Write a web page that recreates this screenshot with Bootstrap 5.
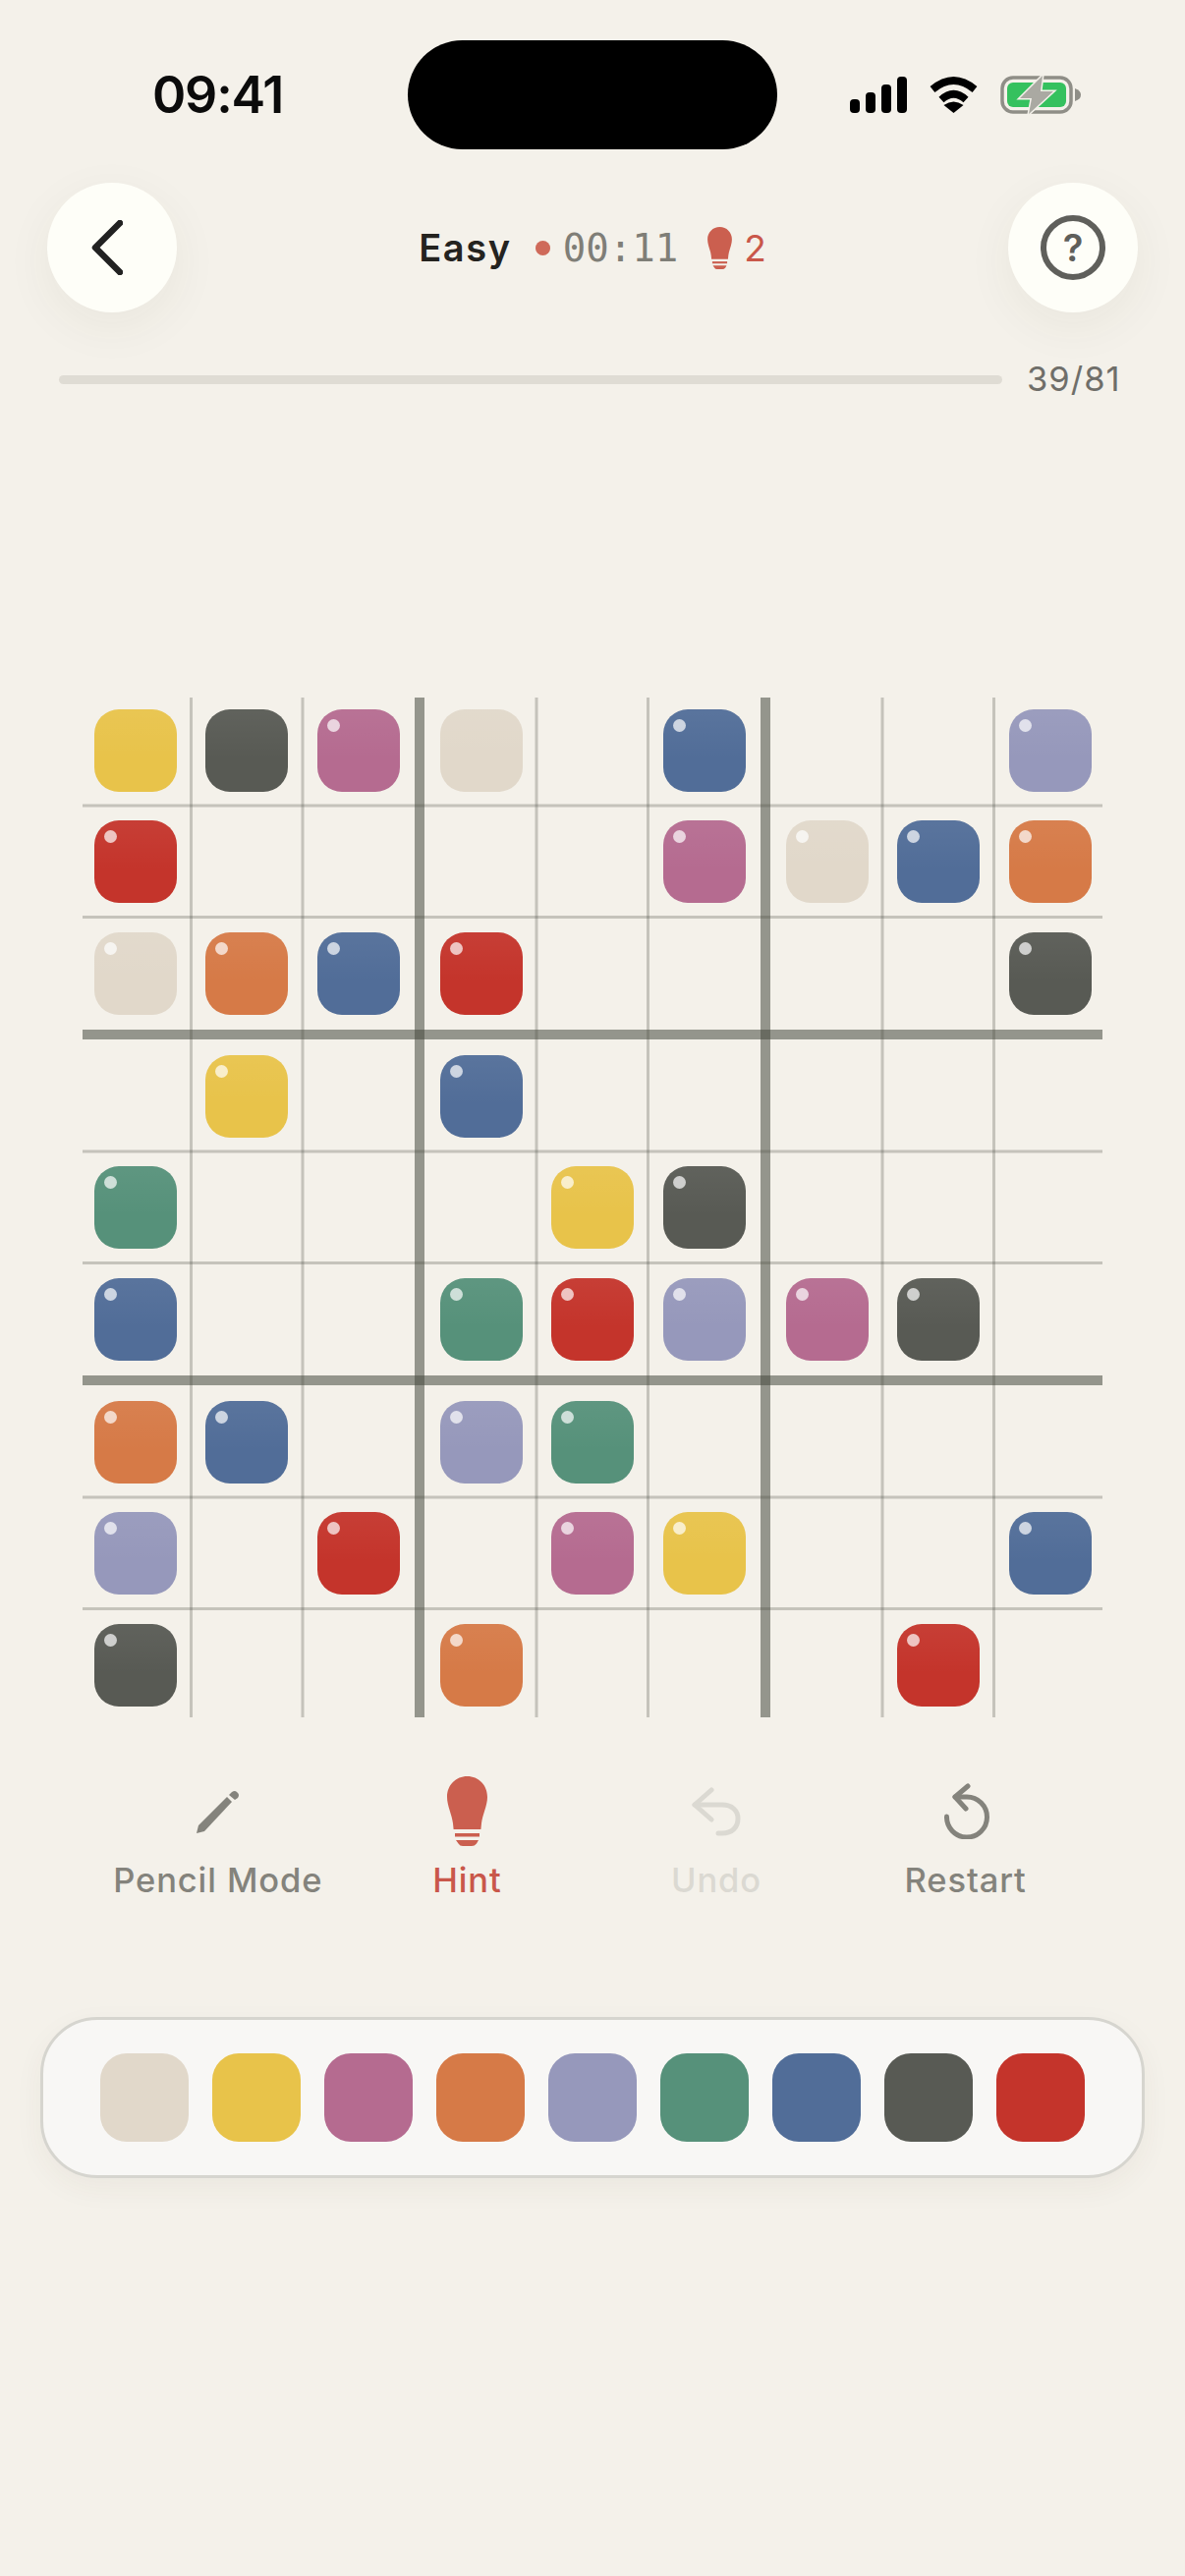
<!DOCTYPE html>
<html lang="en">
<head>
  <meta charset="UTF-8" />
  <meta name="viewport" content="width=device-width, initial-scale=1" />
  <title>Easy - Color Sudoku</title>
  <link href="https://cdn.jsdelivr.net/npm/bootstrap@5.3.0/dist/css/bootstrap.min.css" rel="stylesheet" />
  <style>
    body {
      background-color: #f4f1ea;
      font-family: Inter, "Liberation Sans", sans-serif;
      width: 1206px;
      min-height: 2622px;
      overflow-x: hidden;
    }
    .status-row {
      height: 111px;
      margin-top: 41px;
      padding-left: 155px;
    }
    .status-time {
      width: 260px;
      font-size: 52px;
      font-weight: 600;
      letter-spacing: -1.2px;
      color: #0b0b0b;
      line-height: 1;
    }
    .island {
      width: 376px;
      height: 111px;
      background: #000;
    }
    .status-icons {
      margin-left: 74px;
    }
    .status-gap {
      margin-left: 23px;
    }
    .top-row {
      margin-top: 34px;
      padding: 0 48px;
    }
    .round-btn {
      width: 132px;
      height: 132px;
      padding: 0;
      background: #fefef8;
      border: 0;
      box-shadow: 0 14px 50px rgba(70, 60, 40, .06);
    }
    .back-icon {
      margin-right: 10px;
    }
    .help-ring {
      width: 66px;
      height: 66px;
      border: 6px solid #5f5f5b;
      color: #5f5f5b;
      font-size: 38px;
      font-weight: 600;
      line-height: 1;
    }
    .level {
      font-size: 38px;
      font-weight: 600;
      color: #24231f;
      letter-spacing: 1.6px;
      line-height: 1;
    }
    .rec-dot {
      width: 15px;
      height: 15px;
      background: #cf6a5a;
      margin-left: 24px;
      margin-right: 13px;
    }
    .clock {
      font-family: "DejaVu Sans Mono", "Liberation Mono", monospace;
      font-size: 39px;
      color: #7f7e77;
      line-height: 1;
    }
    .hint-count {
      font-size: 37px;
      color: #c9574a;
      line-height: 1;
      margin-left: 12px;
    }
    .stat-bulb {
      margin-left: 30px;
    }
    .progress-row {
      height: 40px;
      margin-top: 48px;
      padding: 0 68px 0 60px;
    }
    .progress-row .progress {
      height: 9px;
      background: #dfdcd4;
    }
    .moves {
      width: 93px;
      margin-left: 25px;
      font-size: 34.5px;
      color: #6f6e69;
      letter-spacing: 1px;
      white-space: nowrap;
      line-height: 1;
    }
    .board {
      width: 1038px;
      height: 1038px;
      margin: 304px 0 0 84px;
      display: grid;
      grid-template-columns: 113px 114px 125px 113px 114px 125px 113px 114px 107px;
      grid-template-rows: 113px 114px 125px 113px 114px 125px 113px 114px 107px;
    }
    .board-cell {
      padding: 12px 0 0 12px;
    }
    .board-lines {
      top: 0;
      left: 0;
      pointer-events: none;
    }
    .tile {
      width: 84px;
      height: 84px;
      border-radius: 25px;
      background-image: linear-gradient(180deg, rgba(255, 255, 255, .05), rgba(255, 255, 255, 0) 60%);
    }
    .tile-dot::after {
      content: "";
      position: absolute;
      top: 9.5px;
      left: 9.5px;
      width: 13px;
      height: 13px;
      border-radius: 50%;
      background: rgba(255, 255, 255, .7);
    }
    .c-beige { background-color: #e1d8ca; }
    .c-yellow { background-color: #e8c34a; }
    .c-pink { background-color: #b56b90; }
    .c-orange { background-color: #d67a47; }
    .c-lav { background-color: #9698bb; }
    .c-green { background-color: #56917a; }
    .c-blue { background-color: #516d98; }
    .c-dark { background-color: #585a54; }
    .c-red { background-color: #c4342b; }
    .tools {
      margin: 60px 0 0 95px;
      width: 1016px;
    }
    .tool {
      width: 253.6px;
      color: #84837c;
    }
    .tool-icon {
      height: 71px;
    }
    .tool-label {
      margin-top: 15px;
      font-size: 34.5px;
      font-weight: 500;
      letter-spacing: .9px;
      line-height: 40px;
      white-space: nowrap;
    }
    .tool-hint { color: #c9574a; }
    .tool-off { color: #dbd9d2; }
    .restart-icon {
      margin-left: 3px;
    }
    .palette {
      width: 1124px;
      height: 164px;
      margin: 119px 0 0 41px;
      gap: 24px;
      background: #f8f7f5;
      border: 3px solid #d6d5cf;
      border-radius: 58px;
      box-shadow: 0 10px 30px rgba(70, 60, 40, .05);
    }
    .swatch {
      width: 90px;
      height: 90px;
      padding: 0;
      border: 0;
      border-radius: 27px;
    }
  </style>
</head>
<body>
  <svg width="0" height="0" class="position-absolute">
    <symbol id="bulb" viewBox="0 0 41 71">
      <path d="M20.5 0C9 0 0 9 0 21c0 9 5 18 6 27l.6 6h27.8l.6-6c1-9 6-18 6-27C41 9 32 0 20.5 0z" />
      <rect x="8" y="58" width="25" height="3.5" />
      <path d="M9 65h23l-2 3.5Q28 71 25 71h-9q-3 0-4.500-2.500z" />
    </symbol>
  </svg>

  <div class="status-row d-flex align-items-center">
    <div class="status-time">09:41</div>
    <div class="island rounded-pill"></div>
    <div class="status-icons d-flex align-items-center">
      <svg width="58" height="37" viewBox="0 0 58 37">
        <rect x="0" y="23" width="10" height="14" rx="4" />
        <rect x="16" y="16" width="10" height="21" rx="4" />
        <rect x="32" y="8" width="10" height="29" rx="4" />
        <rect x="48" y="0" width="10" height="37" rx="4" />
      </svg>
      <svg class="status-gap" width="49" height="37" viewBox="0 0 49 37">
        <path d="M3 13Q24.500-5 46 13" fill="none" stroke="#000" stroke-width="7.500" />
        <path d="M12 23.500Q24.500 12 37 23.500" fill="none" stroke="#000" stroke-width="7.500" />
        <path d="M24.500 37L14.500 29Q24.500 22 34.500 29z" />
      </svg>
      <svg class="status-gap" width="82" height="39" viewBox="0 0 82 39">
        <rect x="2" y="2" width="70" height="35" rx="11" fill="none" stroke="#8f8e87" stroke-width="3.500" />
        <path d="M76 13q6 2 6 6.500t-6 6.500z" fill="#8f8e87" />
        <rect x="7" y="7" width="60" height="25" rx="6" fill="#35c15e" />
        <path d="M43 0L20 23H32L29 39L54 16H41z" fill="#aaa9a2" stroke="#f4f1ea" stroke-width="3" paint-order="stroke" />
      </svg>
    </div>
  </div>

  <div class="top-row d-flex align-items-center justify-content-between">
    <button type="button" class="btn round-btn rounded-circle d-flex align-items-center justify-content-center" aria-label="Back">
      <svg class="back-icon" width="32" height="56" viewBox="0 0 32 56">
        <path d="M29 3L4 28L29 53" fill="none" stroke="#222" stroke-width="6.500" stroke-linecap="round" stroke-linejoin="round" />
      </svg>
    </button>
    <div class="d-flex align-items-center">
      <span class="level">Easy</span>
      <span class="rec-dot rounded-circle"></span>
      <span class="clock">00:11</span>
      <svg class="stat-bulb" width="25" height="43" fill="#cb5f4f"><use href="#bulb" /></svg>
      <span class="hint-count">2</span>
    </div>
    <button type="button" class="btn round-btn rounded-circle d-flex align-items-center justify-content-center" aria-label="Help">
      <span class="help-ring rounded-circle d-flex align-items-center justify-content-center">?</span>
    </button>
  </div>

  <div class="progress-row d-flex align-items-center">
    <div class="progress flex-grow-1 rounded-pill"></div>
    <div class="moves">39/81</div>
  </div>

  <div class="board position-relative" id="board">
    <svg class="board-lines position-absolute" width="1038" height="1038" id="lines"></svg>
  </div>

  <div class="tools d-flex">
    <div class="tool d-flex flex-column align-items-center">
      <div class="tool-icon d-flex align-items-center">
        <svg width="44" height="44" viewBox="0 0 44 44" fill="currentColor">
          <path d="M0 44L2 36L31 7L36 12L8 42z" />
          <path d="M33 5L36 2Q39 0 41 2L42 3Q44 5 42 8L39 10z" />
        </svg>
      </div>
      <div class="tool-label">Pencil Mode</div>
    </div>
    <div class="tool tool-hint d-flex flex-column align-items-center">
      <div class="tool-icon d-flex align-items-center">
        <svg width="41" height="71" fill="#cb5f4f"><use href="#bulb" /></svg>
      </div>
      <div class="tool-label">Hint</div>
    </div>
    <div class="tool tool-off d-flex flex-column align-items-center">
      <div class="tool-icon d-flex align-items-center">
        <svg width="50" height="50" viewBox="0 0 50 50" fill="none" stroke="currentColor" stroke-width="5" stroke-linecap="round" stroke-linejoin="round">
          <path d="M20 3L3 18L20 33" />
          <path d="M3 18H31C41 18 47 24 47 32C47 41 41 47 31 47H27" />
        </svg>
      </div>
      <div class="tool-label">Undo</div>
    </div>
    <div class="tool d-flex flex-column align-items-center">
      <div class="tool-icon d-flex align-items-center">
        <svg class="restart-icon" width="46" height="57" viewBox="0 0 46 57" fill="none" stroke="currentColor" stroke-width="5" stroke-linecap="round" stroke-linejoin="round">
          <path d="M24 3L11 14L22 26" />
          <path d="M11 14H23A20.500 20.500 0 1 1 2.500 34" />
        </svg>
      </div>
      <div class="tool-label">Restart</div>
    </div>
  </div>

  <div class="palette d-flex align-items-center justify-content-center" id="palette"></div>

  <script src="https://cdn.jsdelivr.net/npm/bootstrap@5.3.0/dist/js/bootstrap.bundle.min.js"></script>
  <script>
    const colores = {
      b: 'c-beige', y: 'c-yellow', p: 'c-pink', o: 'c-orange', l: 'c-lav',
      g: 'c-green', B: 'c-blue', k: 'c-dark', r: 'c-red'
    };
    const tablero = [
      'ykpb.B..l',
      'r....pbBo',
      'boBr....k',
      '.y.B.....',
      'g...yk...',
      'B..grlpk.',
      'oB.lg....',
      'l.r.py..B',
      'k..o...r.'
    ];
    // first row tiles with no highlight dot
    const sinPunto = ['0-0', '0-1', '0-3'];

    const board = document.getElementById('board');
    const lines = document.getElementById('lines');

    tablero.forEach((fila, f) => {
      [...fila].forEach((letra, c) => {
        const cell = document.createElement('div');
        cell.className = 'board-cell';
        if (letra !== '.') {
          const punto = sinPunto.includes(f + '-' + c) ? '' : ' tile-dot';
          cell.innerHTML = `<div class="tile position-relative ${colores[letra]}${punto}"></div>`;
        }
        board.insertBefore(cell, lines);
      });
    });

    // thin lines and box lines, offsets from the board corner
    const finasX = [110.5, 224, 462, 575.5, 814, 927.5];
    const finasY = [110, 223.500, 462, 575.500, 814, 927.500];
    const gruesas = [343, 695];
    let svg = '';
    finasX.forEach(p => {
      svg += `<rect x="${p - 1.5}" y="0" width="3" height="1038" fill="rgba(70,72,62,.27)" />`;
    });
    finasY.forEach(p => {
      svg += `<rect x="0" y="${p - 1.5}" width="1038" height="3" fill="rgba(70,72,62,.27)" />`;
    });
    gruesas.forEach(p => {
      svg += `<rect x="${p - 5}" y="0" width="10" height="1038" fill="rgba(70,72,62,.55)" />`;
      svg += `<rect x="0" y="${p - 5}" width="1038" height="10" fill="rgba(70,72,62,.55)" />`;
    });
    lines.innerHTML = svg;

    const palette = document.getElementById('palette');
    'bypolgBkr'.split('').forEach(letra => {
      palette.innerHTML += `<button type="button" class="btn swatch ${colores[letra]}"></button>`;
    });
  </script>
</body>
</html>
